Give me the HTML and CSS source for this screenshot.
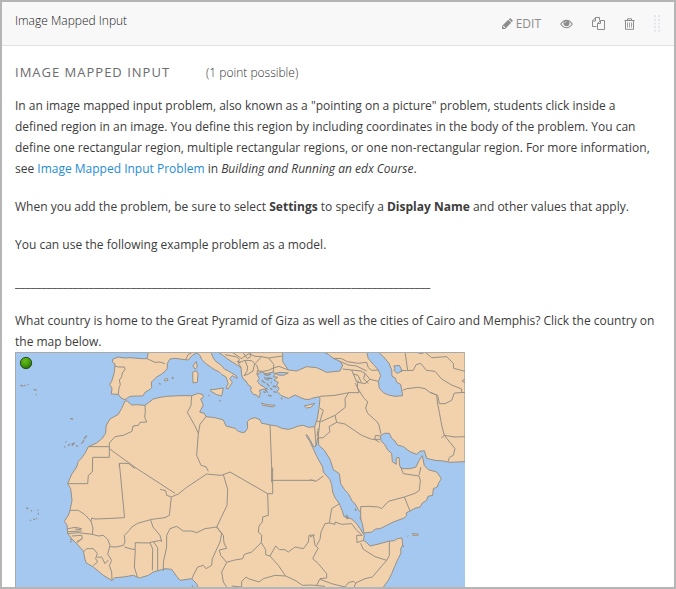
FILE: index.html
```html
<!DOCTYPE html>
<html lang="en">
<head>
<meta charset="utf-8">
<meta name="viewport" content="width=device-width, initial-scale=1">
<title>Image Mapped Input</title>
<link rel="stylesheet" href="styles.css">
</head>
<body>
<article class="component">
  <header class="component-header">
    <span class="component-name">Image Mapped Input</span>
    <div class="actions">
      <button class="action edit" type="button">
        <svg width="12" height="12" viewBox="0 0 12 12" aria-hidden="true"><path fill="currentColor" fill-rule="evenodd" d="M1 8 7.200 1.800 10.200 4.800 4 11H1ZM7.800 1.200 8.700.4Q9.200 0 9.700.5L11.500 2.300Q12 2.800 11.500 3.300L10.800 4.200ZM2 8.500V9.200H2.900V10H3.500L4.200 9.300 2.700 7.800Z"/></svg>
        <span>EDIT</span>
      </button>
      <button class="action" type="button" aria-label="View">
        <svg width="13" height="12" viewBox="0 0 13 12"><path fill="none" stroke="currentColor" stroke-width="1.100" d="M.8 6Q3.200 2.200 6.500 2.200T12.200 6Q9.800 9.800 6.500 9.800T.8 6Z"/><circle cx="6.500" cy="5.300" r="3" fill="currentColor"/><path d="M4.900 5.100Q5 3.800 6.400 3.700" fill="none" stroke="#f8f8f8" stroke-width=".7"/></svg>
      </button>
      <button class="action" type="button" aria-label="Duplicate">
        <svg width="13" height="13" viewBox="0 0 13 13"><path fill="none" stroke="currentColor" d="M4.500 9.500H.5V4L3.500.5H7.500V3.500M.5 4H3.500V.5M5.500 12.500V6.500L8.500 3.500H12.500V12.500ZM5.500 6.500H8.500V3.500"/></svg>
      </button>
      <button class="action" type="button" aria-label="Delete">
        <svg width="11" height="12" viewBox="0 0 11 12"><path fill="none" stroke="currentColor" d="M.5 2.500H10.500M3.500 2.500V.8H7.500V2.500M1.500 2.500V11.300H9.500V2.500"/><path fill="none" stroke="currentColor" stroke-width=".8" d="M3.500 4.500V9.500M5.500 4.500V9.500M7.500 4.500V9.500"/></svg>
      </button>
      <button class="action drag" type="button" aria-label="Drag to reorder">
        <svg width="6" height="17" viewBox="0 0 6 17"><path fill="none" stroke="currentColor" stroke-width="2" stroke-dasharray="2 1.700" d="M1 0V17M5 0V17"/></svg>
      </button>
    </div>
  </header>
  <section class="problem">
    <div class="problem-heading">
      <h2>Image Mapped Input</h2>
      <span class="points">(1 point possible)</span>
    </div>
    <p>In an image mapped input problem, also known as a "pointing on a picture" problem, students click inside a defined region in an image. You define this region by including coordinates in the body of the problem. You can define one rectangular region, multiple rectangular regions, or one non-rectangular region. For more information, see <a href="#">Image Mapped Input Problem</a> in <em>Building and Running an edx Course</em>.</p>
    <p>When you add the problem, be sure to select <strong>Settings</strong> to specify a <strong>Display Name</strong> and other values that apply.</p>
    <p>You can use the following example problem as a model.</p>
    <p>_______________________________________________________________________________</p>
    <p class="question">What country is home to the Great Pyramid of Giza as well as the cities of Cairo and Memphis? Click the country on the map below.</p>
    <svg class="map" viewBox="0 0 1350 708" role="img" aria-label="Map of North Africa and the Middle East">
      <defs>
        <radialGradient id="pin" cx=".4" cy=".3" r=".7"><stop offset="0" stop-color="#66bd1c"/><stop offset=".6" stop-color="#459c0c"/><stop offset="1" stop-color="#286b05"/></radialGradient>
      </defs>
      <rect class="sea" width="1350" height="708"/>
      <!-- Mainland coast -->
      <path class="land" d="M400 0 396 20 380 20 345 17 328 18 310 15 294 21 292 30 300 36 299 50 297 65 290 88 284 98 291 108 289 126 310 127 318 138 330 143 345 133 365 132 383 132 391 120 402 114 410 107 409 90 425 75 440 66 450 58 457 49 457 34 465 21 480 19 495 21 520 24 533 9 545 3 555 10 560 22 575 37 590 47 600 54 612 59 620 67 633 75 638 90 640 94 633 109 640 110 645 102 652 91 644 80 652 71 667 79 664 71 650 63 640 57 628 51 620 41 600 26 592 12 588 0H608L625 11 635 19 652 30 665 38 678 47 680 69 684 80 693 87 699 98 709 105 707 116 715 127 725 129 732 137 736 123 733 115 747 111 758 122 748 105 735 98 727 88 733 80 726 67 740 60 753 65 775 60 780 67 775 74 788 76 777 84 790 91 785 100 792 109 787 118 797 130 820 139 840 129 860 138 870 142 885 142 890 139 913 134 915 140 912 169 907 199 899 224 880 226 865 220 850 222 835 228 820 232 800 229 785 222 765 219 753 216 740 214 735 203 720 197 705 201 697 209 698 229 690 240 683 242 670 238 660 229 633 222 625 204 600 197 573 194 568 184 554 180 565 159 557 141 565 136 564 128 550 124 530 131 495 131 455 133 435 136 415 141 390 160 365 158 350 159 337 147 330 147 320 169 310 187 285 201 276 216 273 225 272 244 260 261 245 273 220 284 210 304 200 318 190 328 185 345 170 367 158 395 167 410 171 445 165 475 160 490 148 508 156 519 158 545 170 560 185 575 205 597 210 622 214 633 235 645 265 670 290 685 300 677 325 675 355 670 373 678 400 670 415 660 450 650 470 652 485 673 495 685 530 680 545 695 550 708H1103L1120 685 1130 665 1140 641 1147 625 1158 603 1157 590 1163 580 1161 558 1147 560 1138 566 1120 568 1095 575 1065 582 1055 572 1045 565 1048 550 1035 530 1025 515 1010 501 987 494 982 477 973 455 960 437 953 420 950 398 945 383 925 360 923 345 905 313 897 295 885 269 875 254 873 248 878 251 897 285 903 282 910 249 911 279 928 295 945 322 955 353 973 365 977 395 988 412 1000 425 1012 448 1020 455 1031 475 1037 480 1037 500 1042 515 1047 543 1070 540 1082 531 1095 530 1125 515 1140 508 1168 498 1175 490 1173 483 1185 477 1200 469 1215 465 1222 453 1235 445 1239 433 1253 430 1255 410 1267 405 1270 395 1279 380 1265 360 1240 353 1228 341 1222 311 1213 324 1203 345 1185 350 1160 350 1154 341 1152 316 1143 319 1144 337 1132 329 1130 304 1118 294 1110 279 1098 266 1096 252 1108 244 1123 244 1130 259 1140 267 1147 279 1165 284 1185 299 1205 307 1215 298 1228 296 1235 319 1260 325 1285 327 1305 331 1350 329V0Z"/>
      <!-- Islands -->
      <path class="land" d="M533 61 544 56 549 65 547 91 534 93ZM542 30 544 28 547 45 540 51 534 42ZM586 113 600 112 625 108 620 132 605 128 588 118ZM740 153 755 158 780 160 775 165 743 160ZM868 162 900 154 887 166 875 168ZM448 82 456 79 459 85 450 87ZM472 76 476 78 471 79ZM1192 545 1210 546 1208 550 1194 550Z"/>
      <path class="islets" d="M16 100 25 102M28 99 31 102M38 97 40 99M56 112 65 115M63 127 65 129M165 200 174 201M152 268 154 271M148 283 150 286M159 281 165 276M170 276 178 273 170 281M184 280 188 284M199 275 207 265M207 261 215 251M433 93 436 98M798 138 802 142M613 145 616 148M580 130 583 131M34 467 40 471M48 475 51 478M68 473 70 475M69 483 71 487M45 504 48 506M55 500 59 504M63 499 66 501M746 66 755 70 767 66M748 76 755 83M760 78 772 80M767 90 770 93M755 94 763 103M773 102 784 105M752 108 758 112M765 109 772 112M740 85 750 93M745 119 752 122M759 130 770 132M775 119 785 121M757 76 760 86M1020 470 1024 477M993 489 999 497 995 501M1035 495 1038 502M1162 580 1166 584M1178 551 1179 553M165 561 172 564M165 568 170 570M531 701 534 706"/>
      <!-- Inland seas -->
      <path class="lake" d="M803 0V29L820 54 845 57 875 44 905 47 935 61 975 57 983 39 975 28 955 19 940 7 925 0ZM780 64 795 61 820 63 805 70 790 69ZM1055 0 1060 20 1075 37 1090 54 1097 71 1090 89 1093 109 1105 122 1120 129 1140 133 1163 131 1157 97 1145 91 1141 78 1131 73 1130 54 1122 34 1105 14 1090 0ZM1136 42 1153 40 1162 57 1147 64 1136 55 1140 49ZM1200 0 1220 5 1230 0Z"/>
      <!-- Country borders -->
      <g class="borders">
        <path d="M299 42 310 45 328 45 330 53 322 63 320 75 313 84 316 98 312 108 310 127M396 20 420 31 435 30 450 35M513 21 520 7 535 0M630 8 665 15 673 22 670 33 678 47M650 0 680 20 690 12 702 5M665 28 677 31M670 33 690 25 710 26 719 34 714 57 700 66 687 71 696 58 698 45 690 26M719 34 725 40 730 55 725 67M702 5 720 13 740 14 760 18 803 12M740 14 721 34M725 57 745 58 760 55 775 48 792 43 820 54M761 18 776 37 775 60M683 0 697 20 705 16 708 0"/>
        <path d="M955 19 980 20 997 29 1030 34 1055 31 1060 47 1070 55 1090 54M983 51 1010 54 1038 57 1050 64 1065 82M1010 54 1015 66 1029 70 1039 91M1050 64 1046 80 1060 95M1015 66 1025 90 1050 95 1065 82 1090 88M975 28 1000 39 1025 42 1055 57M1029 85 1027 105 1032 122 1001 122 960 130 915 133M1020 93 1032 115 1045 136 1058 150 1052 168 1058 184 1085 208 1092 219 1098 247M1001 122 990 140 991 166 960 190 920 208 905 208M960 190 965 211 990 216 1040 250 1070 262 1095 262M965 211 942 224 945 239 925 257 910 258M1096 252 1082 250 1079 262 1093 271M915 169 925 175 915 207 910 250M899 224 903 282M910 229 906 252"/>
        <path d="M1163 115 1175 110 1210 106 1230 110 1245 121 1265 129 1267 150 1273 181 1280 219 1288 250 1320 290 1315 310 1303 316 1300 328M1245 121 1268 130 1273 155 1290 155 1310 145 1318 123 1350 121M1157 55 1175 56 1195 55 1203 38 1217 34 1234 55 1260 58 1280 81 1310 99 1340 111 1340 121M1170 0 1178 55M1230 0 1250 17 1295 14 1315 34 1316 49 1350 58M1350 80 1341 87 1350 92M1288 250 1320 255 1350 254M1288 250 1279 258"/>
        <path d="M390 160 391 179 389 195 395 210 375 211 370 220 354 222 351 238 325 250 300 254 283 273 283 316 233 316 232 360 220 370 218 395 158 395M220 284H283M283 290 360 346 480 424M313 345V334H340L360 350M313 334 328 489 M328 489V497L270 500 240 501 230 498 228 508M530 131 528 160 517 181 540 222 550 244 545 310 558 340 575 345M573 194 555 217 550 245M765 219 770 345V391M770 385H900"/>
        <path d="M165 475 190 475 210 488 228 508 234 528 232 547 190 542 158 545M158 530 170 528 180 526 200 530 196 533 180 531M158 539 200 537M170 552 200 550 202 560 185 569M200 560 185 575M232 547 250 552 265 550 278 562 285 580 284 584 305 585 325 580 330 570M205 600 215 590 235 590 247 604 242 620 248 630 235 640M247 616 260 615 270 635 280 624M284 584 278 606 290 625 283 640 290 660 291 685M330 570 328 550 343 535 350 525 368 514 410 502 450 497M328 585 345 590 360 593 361 572 400 573 415 569 440 565M361 593 358 645 367 675M405 573 413 590 412 655M415 569 428 587 428 657M407 504 414 525 435 550 440 570M445 657 445 630 455 585 455 550 465 530 485 523 505 537 530 537 545 542 570 530 605 525M450 497 463 490 469 435 455 430 452 416 435 412M469 435 490 426 515 406 575 366 615 370 625 368 645 360 758 425H773V347M573 345 580 358M625 368 638 412 636 460 605 525 620 545 615 570 592 620 590 640 573 650 565 640 548 645 536 668 531 680M605 525 625 550 627 573 635 589 613 594 617 610 635 631 620 660 625 690 635 705M635 631 655 625 683 620 688 607 710 600 739 572"/>
        <path d="M758 425 760 490 743 495 742 510 732 522 730 540 740 550 739 572 752 593 752 608 765 612 782 582 793 593 810 593 820 600 840 585 865 590 880 570 882 550 900 549M765 612 790 640 812 672 780 670 745 680 732 690 700 680 693 675 680 688 680 705 650 702M812 672 840 685 863 700 890 699 930 703M885 555 895 550 900 580 910 588 903 600 893 620 910 635 935 665 935 678 915 680 905 700M905 580 915 562 918 540 930 515 943 513 950 470 973 455M943 513 960 517 960 510 980 517 1010 515 1025 535 1042 550M1042 550 1025 550 1026 572 1045 565M1037 574 1045 592 1080 614 1115 625 1123 610V568M1115 625 1072 675 1050 680 1022 693 1015 688 1000 692 990 705 950 695 915 682M885 383 903 388 925 372M1022 693 1017 708M1037 480V464L1060 463 1090 465 1100 470 1120 448 1168 435 1200 424 1213 415 1216 385 1212 372 1165 365 1157 345M1168 435 1185 477M1212 370 1218 345"/>
      </g>
      <path class="map-edge" d="M0 1.500H1350M1.500 0V708"/>
      <circle class="pin" cx="33" cy="33" r="17"/>
    </svg>
  </section>
</article>
</body>
</html>
```
FILE: styles.css
```css
* {
  box-sizing: border-box;
}

body {
  margin: 0;
  background: #fff;
  color: #3c3c3c;
  font-family: "Open Sans", sans-serif;
  font-size: 12px;
  line-height: 21px;
}

.component {
  height: 100vh;
  overflow: hidden;
  border: 2px solid #b5b5b5;
}

.component-header {
  display: flex;
  align-items: center;
  justify-content: space-between;
  padding: 0 14px 0 13px;
  height: 44px;
  background: #f8f8f8;
  border-bottom: 1px solid #e2e2e2;
}

.component-name {
  padding-bottom: 6px;
  color: #222;
  font-weight: 300;
}

.actions {
  display: flex;
  align-items: center;
  gap: 19px;
}

.action {
  display: flex;
  align-items: center;
  gap: 3px;
  padding: 0;
  border: 0;
  background: none;
  color: #8c8c8c;
  font: inherit;
  cursor: pointer;
}

.drag {
  color: #e4e7ea;
}

.problem {
  padding: 16px 16px 0 13px;
}

.problem-heading {
  display: flex;
  align-items: baseline;
  gap: 36px;
}

h2 {
  margin: 0;
  color: #6c6c6c;
  font-size: 13px;
  font-weight: 400;
  letter-spacing: 1px;
  text-transform: uppercase;
}

.points {
  color: #333;
  font-weight: 300;
}

p {
  margin: 12px 0 17px;
}

p + p {
  margin-top: 0;
}

p.question {
  margin-bottom: 0;
}

a {
  color: #1f8dd6;
  text-decoration: none;
}

.map {
  display: block;
  width: 100%;
  max-width: 450px;
}

.sea {
  fill: #a4c8f0;
}

.land,
.lake,
.borders,
.islets {
  stroke: #969087;
  stroke-width: 3;
  stroke-linejoin: round;
}

.land {
  fill: #f2d2ac;
}

.lake {
  fill: #a4c8f0;
}

.borders,
.islets {
  fill: none;
}

.islets {
  stroke-width: 4;
}

.map-edge {
  stroke: #aaa;
  stroke-width: 3;
}

.pin {
  fill: url(#pin);
  stroke: #2c4f1a;
  stroke-width: 3;
}
```
